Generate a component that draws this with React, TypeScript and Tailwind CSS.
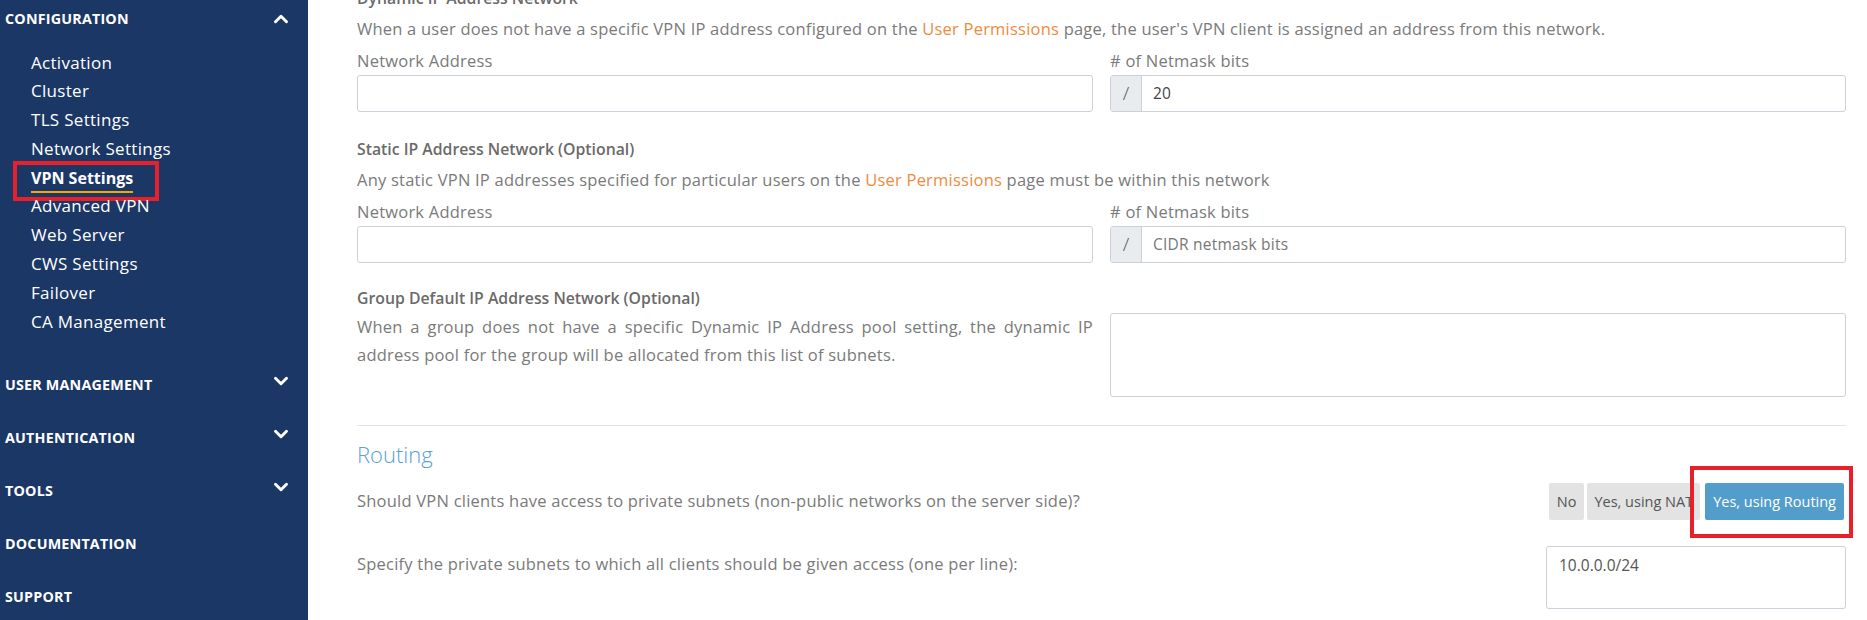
import React from 'react'
import { ChevronUp, ChevronDown } from 'lucide-react'

const FONT = "font-['Open_Sans',sans-serif]"

const configItems = [
  'Activation',
  'Cluster',
  'TLS Settings',
  'Network Settings',
  'VPN Settings',
  'Advanced VPN',
  'Web Server',
  'CWS Settings',
  'Failover',
  'CA Management',
]

const otherSections = [
  { name: 'USER MANAGEMENT', chevron: true },
  { name: 'AUTHENTICATION', chevron: true },
  { name: 'TOOLS', chevron: true },
  { name: 'DOCUMENTATION', chevron: false },
  { name: 'SUPPORT', chevron: false },
]

function Sidebar() {
  return (
    <aside className="w-[308px] shrink-0 bg-[#1b3765] text-white">
      <div className="flex h-[38px] items-center justify-between pl-[5px] pr-[16px]">
        <span className="text-[14.3px] font-bold tracking-[0.2px]">CONFIGURATION</span>
        <ChevronUp className="h-[22px] w-[22px]" strokeWidth={3.2} />
      </div>
      <ul className="mt-[10.5px]">
        {configItems.map((item) => (
          <li key={item} className="relative h-[28.8px] pl-[31px] leading-[28.8px] tracking-[0.3px]">
            {item === 'VPN Settings' ? (
              <>
                <span className="relative text-[16px] font-bold tracking-normal">
                  {item}
                  <span className="absolute left-0 right-0 top-[24px] h-[2px] bg-[#f5a800]" />
                </span>
                <span className="absolute left-[13px] top-[-3px] h-[40px] w-[146px] border-[4px] border-[#e8202a]" />
              </>
            ) : (
              <span className="text-[17px] font-medium">{item}</span>
            )}
          </li>
        ))}
      </ul>
      <div className="mt-[21.5px]">
        {otherSections.map((s) => (
          <div key={s.name} className="flex h-[53px] items-center justify-between pl-[5px] pr-[16px]">
            <span className="text-[14.3px] font-bold tracking-[0.2px]">{s.name}</span>
            {s.chevron && <ChevronDown className="-mt-[6px] h-[22px] w-[22px]" strokeWidth={3.2} />}
          </div>
        ))}
      </div>
    </aside>
  )
}

function Link({ children }: { children: React.ReactNode }) {
  return <span className="text-[#f08a3c]">{children}</span>
}

function TextInput({ value, placeholder }: { value?: string; placeholder?: string }) {
  return (
    <div className="h-[37px] rounded-[3px] border border-[#ccd0d8] bg-white px-3 text-[15.5px] leading-[35px] text-[#555]">
      {value ?? <span className="text-[#888]">{placeholder}</span>}
    </div>
  )
}

function MaskInput({ value, placeholder }: { value?: string; placeholder?: string }) {
  return (
    <div className="flex h-[37px] overflow-hidden rounded-[3px] border border-[#ccd0d8] bg-white text-[15.5px] leading-[35px]">
      <div className="w-[31px] shrink-0 border-r border-[#ccd0d8] bg-[#e9ecef] text-center text-[19px] font-light text-[#555]">/</div>
      <div className="pl-[11px] text-[#444]">
        {value ?? <span className="text-[#777]">{placeholder}</span>}
      </div>
    </div>
  )
}

function Heading({ children }: { children: React.ReactNode }) {
  return <h3 className="h-[24px] text-[15.8px] font-semibold leading-[24px] tracking-normal text-[#6a6a6a]">{children}</h3>
}

function NetworkFields({ mask, maskPlaceholder }: { mask?: string; maskPlaceholder?: string }) {
  return (
    <div className="mt-[8px] grid grid-cols-2 gap-x-[17px]">
      <div>
        <div className="h-[24px] leading-[24px] text-[#7a7a7a]">Network Address</div>
        <div className="mt-[2px]">
          <TextInput />
        </div>
      </div>
      <div>
        <div className="h-[24px] leading-[24px] text-[#7a7a7a]">
          # of Netmask bits
        </div>
        <div className="mt-[2px]">
          <MaskInput value={mask} placeholder={maskPlaceholder} />
        </div>
      </div>
    </div>
  )
}

function Main() {
  return (
    <main className="flex-1 overflow-hidden bg-white pl-[49px] pr-[21px] text-[16.5px] tracking-[0.22px] text-[#7a7a7a]">
      <div className="-mt-[14px]">
        <Heading>Dynamic IP Address Network</Heading>
        <p className="mt-[7px] h-[24px] whitespace-nowrap leading-[24px]">
          When a user does not have a specific VPN IP address configured on the <Link>User Permissions</Link> page, the
          user's VPN client is assigned an address from this network.
        </p>
        <NetworkFields mask="20" />
      </div>

      <div className="mt-[25px]">
        <Heading>Static IP Address Network (Optional)</Heading>
        <p className="mt-[7px] h-[24px] leading-[24px]">
          Any static VPN IP addresses specified for particular users on the <Link>User Permissions</Link> page must be
          within this network
        </p>
        <NetworkFields maskPlaceholder="CIDR netmask bits" />
      </div>

      <div className="mt-[23px]">
        <Heading>Group Default IP Address Network (Optional)</Heading>
        <div className="mt-[3px] grid grid-cols-2 gap-x-[17px]">
          <p className="text-justify leading-[28px]">
            When a group does not have a specific Dynamic IP Address pool setting, the dynamic IP address pool for the
            group will be allocated from this list of subnets.
          </p>
          <div className="h-[84px] rounded-[3px] border border-[#ccd0d8] bg-white" />
        </div>
      </div>

      <div className="mt-[28px] border-t border-[#e3e3e3]" />

      <h2 className="mt-[13px] h-[30px] text-[22px] font-light leading-[30px] tracking-normal text-[#5b9fd3]">Routing</h2>

      <div className="mt-[14px] flex h-[37px] items-center justify-between">
        <p>Should VPN clients have access to private subnets (non-public networks on the server side)?</p>
        <div className="relative mr-[2px] flex h-[37px] gap-[3px] text-[14.5px] tracking-normal">
          <button className="rounded-[2px] bg-[#e3e3e3] px-[8px] text-[#555]">No</button>
          <button className="rounded-[2px] bg-[#e3e3e3] px-[7px] text-[#555]">Yes, using NAT</button>
          <button className="ml-[2px] rounded-[2px] bg-[#539dca] px-[8px] text-white">Yes, using Routing</button>
          <span className="absolute right-[-9px] top-[-17px] h-[72px] w-[163px] border-[4px] border-[#e8202a]" />
        </div>
      </div>

      <div className="mt-[26px] flex justify-between">
        <p className="pt-[6px] leading-[24px]">Specify the private subnets to which all clients should be given access (one per line):</p>
        <div className="h-[63px] w-[300px] rounded-[3px] border border-[#ccd0d8] bg-white px-[12px] pt-[6px] text-[15.5px] leading-[24px] tracking-normal text-[#555]">
          10.0.0.0/24
        </div>
      </div>
    </main>
  )
}

export default function App() {
  return (
    <div className={`flex h-[620px] w-[1867px] overflow-hidden ${FONT}`}>
      <Sidebar />
      <Main />
    </div>
  )
}
